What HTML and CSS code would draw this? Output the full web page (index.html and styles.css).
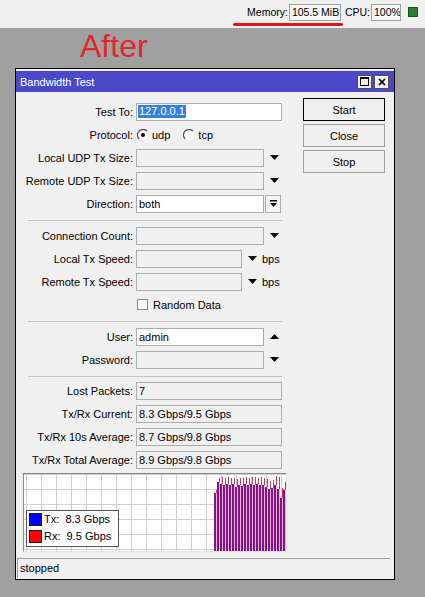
FILE: index.html
```html
<!DOCTYPE html>
<html>
<head>
<meta charset="utf-8">
<title>Bandwidth Test</title>
<link rel="stylesheet" href="styles.css">
</head>
<body>
<div class="topbar">
  <span class="tb-label">Memory:</span><span class="tb-box mem">105.5 MiB</span>
  <span class="tb-label">CPU:</span><span class="tb-box cpu">100%</span>
  <span class="led"></span>
  <span class="underline"></span>
</div>
<div class="after">After</div>
<div class="window">
  <div class="titlebar">
    <span class="title">Bandwidth Test</span>
    <span class="tbtns">
      <span class="tbtn"><svg width="9" height="9" viewBox="0 0 9 9"><rect x="0.5" y="0.5" width="8" height="8" fill="none" stroke="#000"/><rect x="0" y="0" width="9" height="2" fill="#000"/></svg></span>
      <span class="tbtn"><svg width="8" height="8" viewBox="0 0 8 8"><path d="M1 1L7 7M7 1L1 7" stroke="#000" stroke-width="1.7"/></svg></span>
    </span>
  </div>
  <div class="wbody">
    <div class="top">
      <div class="form">
        <div class="row"><span class="lbl">Test To:</span><span class="inp w146"><span class="sel">127.0.0.1</span></span></div>
        <div class="row"><span class="lbl">Protocol:</span>
          <span class="radios">
            <svg class="radio" width="12" height="12" viewBox="0 0 12 12"><circle cx="6" cy="6" r="5.5" fill="#fff"/><path d="M2.1 9.9A5.5 5.5 0 0 1 9.9 2.1" fill="none" stroke="#555" stroke-width="1.3"/><circle cx="6" cy="6" r="2" fill="#000"/></svg><span class="rtext">udp</span>
            <svg class="radio" width="12" height="12" viewBox="0 0 12 12"><circle cx="6" cy="6" r="5.5" fill="#fff"/><path d="M2.1 9.9A5.5 5.5 0 0 1 9.9 2.1" fill="none" stroke="#555" stroke-width="1.3"/></svg><span>tcp</span>
          </span>
        </div>
        <div class="row"><span class="lbl">Local UDP Tx Size:</span><span class="inp w128 gray"></span><span class="arr"><svg width="9" height="5" viewBox="0 0 9 5"><polygon points="0,0 9,0 4.5,5" fill="#000"/></svg></span></div>
        <div class="row"><span class="lbl">Remote UDP Tx Size:</span><span class="inp w128 gray"></span><span class="arr"><svg width="9" height="5" viewBox="0 0 9 5"><polygon points="0,0 9,0 4.5,5" fill="#000"/></svg></span></div>
        <div class="row"><span class="lbl">Direction:</span><span class="inp w128">both</span><span class="dirbtn"><svg width="7" height="8" viewBox="0 0 7 8"><rect x="0" y="0" width="7" height="1.5" fill="#000"/><polygon points="0,3 7,3 3.5,7" fill="#000"/></svg></span></div>
        <div class="sep"></div>
        <div class="row"><span class="lbl">Connection Count:</span><span class="inp w128 gray"></span><span class="arr"><svg width="9" height="5" viewBox="0 0 9 5"><polygon points="0,0 9,0 4.5,5" fill="#000"/></svg></span></div>
        <div class="row"><span class="lbl">Local Tx Speed:</span><span class="inp w106 gray"></span><span class="arr arr20"><svg width="9" height="5" viewBox="0 0 9 5"><polygon points="0,0 9,0 4.5,5" fill="#000"/></svg></span><span>bps</span></div>
        <div class="row"><span class="lbl">Remote Tx Speed:</span><span class="inp w106 gray"></span><span class="arr arr20"><svg width="9" height="5" viewBox="0 0 9 5"><polygon points="0,0 9,0 4.5,5" fill="#000"/></svg></span><span>bps</span></div>
        <div class="row"><span class="lbl"></span><span class="check"></span><span>Random Data</span></div>
        <div class="sep"></div>
        <div class="row"><span class="lbl">User:</span><span class="inp w128">admin</span><span class="arr"><svg width="9" height="5" viewBox="0 0 9 5"><polygon points="0,5 9,5 4.5,0" fill="#000"/></svg></span></div>
        <div class="row"><span class="lbl">Password:</span><span class="inp w128 gray"></span><span class="arr"><svg width="9" height="5" viewBox="0 0 9 5"><polygon points="0,0 9,0 4.5,5" fill="#000"/></svg></span></div>
        <div class="sep sep8"></div>
        <div class="row"><span class="lbl">Lost Packets:</span><span class="inp w146 gray">7</span></div>
        <div class="row"><span class="lbl">Tx/Rx Current:</span><span class="inp w146 gray">8.3 Gbps/9.5 Gbps</span></div>
        <div class="row"><span class="lbl">Tx/Rx 10s Average:</span><span class="inp w146 gray">8.7 Gbps/9.8 Gbps</span></div>
        <div class="row"><span class="lbl">Tx/Rx Total Average:</span><span class="inp w146 gray">8.9 Gbps/9.8 Gbps</span></div>
      </div>
      <div class="buttons">
        <div class="btn default">Start</div>
        <div class="btn">Close</div>
        <div class="btn">Stop</div>
      </div>
    </div>
    <div class="graph">
      <svg class="chart" width="262" height="77" viewBox="0 0 262 77">
        <defs>
          <pattern id="grid" patternUnits="userSpaceOnUse" x="2" y="0" width="15" height="15">
            <path d="M0.5 0V15M0 0.5H15" stroke="#cfcfcf" stroke-width="1" fill="none"/>
          </pattern>
        </defs>
        <rect x="0" y="0" width="262" height="77" fill="#fff"/>
        <rect x="0" y="0" width="262" height="77" fill="url(#grid)"/>
        <path fill="#f2b3c6" d="M192 16h1V77h-1z M195 4h1V77h-1z M198 3h1V77h-1z M201 4h1V77h-1z M204 3h1V77h-1z M207 4h1V77h-1z M210 4h1V77h-1z M213 5h1V77h-1z M216 4h1V77h-1z M219 4h1V77h-1z M222 3h1V77h-1z M225 4h1V77h-1z M228 3h1V77h-1z M231 3h1V77h-1z M234 4h1V77h-1z M237 3h1V77h-1z M240 4h1V77h-1z M243 5h1V77h-1z M246 7h1V77h-1z M249 6h1V77h-1z M252 2h1V77h-1z M255 3h1V77h-1z M258 14h1V77h-1z M261 8h1V77h-1z"/>
        <path fill="#cf3a5c" d="M192 16h1V19h-1z M195 4h1V8h-1z M198 3h1V10h-1z M201 4h1V11h-1z M204 3h1V10h-1z M207 4h1V11h-1z M210 4h1V10h-1z M213 5h1V13h-1z M216 4h1V11h-1z M219 4h1V12h-1z M222 3h1V10h-1z M225 4h1V11h-1z M228 3h1V10h-1z M231 3h1V11h-1z M234 4h1V10h-1z M237 3h1V11h-1z M240 4h1V11h-1z M243 5h1V13h-1z M246 7h1V15h-1z M249 6h1V14h-1z M252 2h1V11h-1z M255 3h1V15h-1z M258 14h1V24h-1z M261 8h1V16h-1z"/>
        <path fill="#7a1790" d="M190 19h2V77h-2z M193 8h2V77h-2z M196 10h2V77h-2z M199 11h2V77h-2z M202 10h2V77h-2z M205 11h2V77h-2z M208 10h2V77h-2z M211 13h2V77h-2z M214 11h2V77h-2z M217 12h2V77h-2z M220 10h2V77h-2z M223 11h2V77h-2z M226 10h2V77h-2z M229 11h2V77h-2z M232 10h2V77h-2z M235 11h2V77h-2z M238 11h2V77h-2z M241 13h2V77h-2z M244 15h2V77h-2z M247 14h2V77h-2z M250 11h2V77h-2z M253 15h2V77h-2z M256 24h2V77h-2z M259 16h2V77h-2z"/>
      </svg>
      <div class="legend">
        <div class="lrow"><span class="sw tx"></span><span class="ltext">Tx:  8.3 Gbps</span></div>
        <div class="lrow"><span class="sw rx"></span><span class="ltext">Rx:  9.5 Gbps</span></div>
      </div>
    </div>
    <div class="status">stopped</div>
  </div>
</div>
</body>
</html>
```

FILE: styles.css
```css
* { box-sizing: border-box; }
html, body { margin: 0; padding: 0; }
body {
  background: #a0a0a0;
  font-family: "Liberation Sans", Arial, sans-serif;
  font-size: 11px;
  color: #000;
  width: 425px;
  height: 597px;
  overflow: hidden;
}

/* top status bar */
.topbar {
  position: relative;
  height: 28px;
  background: #f0f0f0;
  display: flex;
  justify-content: flex-end;
  align-items: flex-start;
  padding: 4px 7px 0 0;
  font-size: 10.5px;
  white-space: nowrap;
}
.tb-label { line-height: 17px; }
.tb-box {
  height: 17px;
  line-height: 15px;
  border: 1px solid #a0a0a0;
  background: #f7f7f7;
  padding-left: 2px;
  margin-left: 1px;
  overflow: hidden;
}
.mem { width: 52px; margin-right: 4px; }
.cpu { width: 30px; }
.led {
  width: 10px;
  height: 10px;
  margin: 3px 0 0 7px;
  background: #2f7d2f;
  border: 1px solid #1d4f1d;
}
.underline {
  position: absolute;
  left: 233px;
  top: 23px;
  width: 110px;
  height: 3px;
  background: #e0141e;
  border-radius: 2px;
}

.after {
  height: 40px;
  padding-left: 80px;
  font-size: 32px;
  line-height: 36px;
  color: #e3262b;
}

/* window */
.window {
  margin-left: 15px;
  width: 380px;
  height: 512px;
  border: 1px solid #000;
  background: #f0f0f0;
  padding-top: 2px;
  display: flex;
  flex-direction: column;
}
.titlebar {
  height: 21px;
  flex: none;
  background: #4a4ac8;
  color: #fff;
  display: flex;
  align-items: center;
  justify-content: space-between;
  padding: 0 5px 0 4px;
}
.tbtns { display: flex; gap: 2px; }
.tbtn {
  width: 15px;
  height: 14px;
  background: #f0f0f0;
  border: 1px solid #505050;
  display: flex;
  align-items: center;
  justify-content: center;
}

.wbody { display: flex; flex-direction: column; }
.top { display: flex; }
.form { width: 271px; padding-top: 8px; }
.buttons {
  margin-left: 16px;
  margin-top: 6px;
  display: flex;
  flex-direction: column;
  gap: 3px;
}
.btn {
  width: 82px;
  height: 23px;
  border: 1px solid #a0a0a0;
  background: #f0f0f0;
  display: flex;
  align-items: center;
  justify-content: center;
}
.btn.default { border-color: #000; }

.row { display: flex; align-items: center; height: 23px; }
.lbl { width: 117px; text-align: right; margin-right: 3px; flex: none; }
.inp {
  height: 18px;
  border: 1px solid #acacac;
  background: #fff;
  padding-left: 2px;
  display: flex;
  align-items: center;
  flex: none;
  white-space: nowrap;
}
.inp.gray { background: #f0f0f0; }
.w146 { width: 146px; }
.w128 { width: 128px; }
.w106 { width: 106px; }
.sel {
  background: #3383dc;
  color: #fff;
  line-height: 13px;
  padding: 0 1px;
  margin-left: -1px;
}
.arr {
  width: 18px;
  padding-left: 2px;
  display: flex;
  justify-content: center;
  align-items: center;
  flex: none;
}
.arr.arr20 { width: 20px; padding-left: 0; }
.dirbtn {
  width: 16px;
  height: 18px;
  margin-left: 1px;
  border: 1px solid #acacac;
  background: #f4f4f4;
  display: flex;
  align-items: center;
  justify-content: center;
}
.radios { display: flex; align-items: center; margin-left: 1px; }
.radio { margin-right: 3px; }
.rtext { margin-right: 13px; }
.check {
  width: 11px;
  height: 11px;
  margin-left: 1px;
  margin-right: 5px;
  border: 1px solid #8a8a8a;
  background: #fff;
}
.sep {
  margin: 5px 0 3px 12px;
  width: 254px;
  height: 1px;
  background: #c4c4c4;
}
.sep.sep8 { margin-bottom: 2px; }

/* graph */
.graph {
  position: relative;
  margin-top: 2px;
  margin-left: 7px;
  width: 264px;
  height: 79px;
  border: 1px solid;
  border-color: #8a8a8a #e4e4e4 #e4e4e4 #8a8a8a;
  background: #fff;
}
.chart { display: block; }
.legend {
  position: absolute;
  left: 2px;
  top: 36px;
  width: 93px;
  height: 37px;
  border: 1px solid #555;
  background: #fff;
  padding: 2px 2px;
  display: flex;
  flex-direction: column;
  gap: 4px;
}
.lrow { display: flex; align-items: center; gap: 2px; height: 13px; }
.sw { width: 13px; height: 13px; border: 1px solid #1a1a1a; flex: none; }
.sw.tx { background: #0000ff; }
.sw.rx { background: #ff0000; }
.ltext { white-space: pre; line-height: 13px; }

.status {
  margin-top: 6px;
  margin-left: 1px;
  width: 373px;
  height: 20px;
  border-top: 1px solid #a0a0a0;
  border-left: 1px solid #a0a0a0;
  padding-left: 2px;
  line-height: 19px;
}
```
